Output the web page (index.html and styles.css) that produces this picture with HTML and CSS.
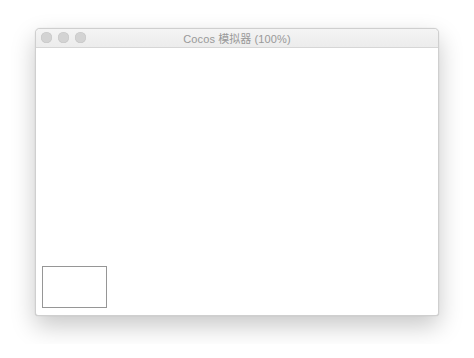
FILE: index.html
```html
<!DOCTYPE html>
<html lang="zh">
<head>
    <meta charset="UTF-8">
    <meta name="viewport" content="width=device-width, initial-scale=1.0">
    <title>Cocos 模拟器</title>
    <link rel="stylesheet" href="styles.css">
</head>
<body>
    <div class="window">
        <div class="titlebar">
            <div class="lights">
                <span class="light"></span>
                <span class="light"></span>
                <span class="light"></span>
            </div>
            <div class="title">Cocos 模拟器 (100%)</div>
        </div>
        <div class="content">
            <div class="stats-box"></div>
        </div>
    </div>
</body>
</html>
```

FILE: styles.css
```css
body {
    margin: 0;
    padding: 28px 35px;
    background-color: #ffffff;
    font-family: "Helvetica Neue", "Liberation Sans", "Noto Sans CJK SC", sans-serif;
}
.window {
    width: 404px;
    height: 288px;
    box-sizing: border-box;
    border: 1px solid #cfcfcf;
    border-radius: 5px 5px 3px 3px;
    background-color: #ffffff;
    box-shadow: 0 10px 24px rgba(0, 0, 0, 0.22), 0 0 1px rgba(0, 0, 0, 0.2);
    display: flex;
    flex-direction: column;
    overflow: hidden;
}
.titlebar {
    position: relative;
    height: 18px;
    flex-shrink: 0;
    background: linear-gradient(#f4f4f4, #ececec);
    border-bottom: 1px solid #d6d6d6;
    display: flex;
    align-items: center;
    justify-content: center;
}
.lights {
    position: absolute;
    left: 5px;
    top: 3px;
    display: flex;
    gap: 6px;
}
.light {
    width: 11px;
    height: 11px;
    border-radius: 50%;
    background-color: #d3d3d3;
    box-shadow: inset 0 0 0 0.5px #c6c6c6;
}
.title {
    font-size: 11px;
    color: #999999;
    letter-spacing: 0.1px;
}
.content {
    flex: 1;
    display: flex;
    align-items: flex-end;
    padding: 0 0 7px 6px;
}
.stats-box {
    width: 63px;
    height: 40px;
    border: 1px solid #969696;
    background-color: #ffffff;
}
```
